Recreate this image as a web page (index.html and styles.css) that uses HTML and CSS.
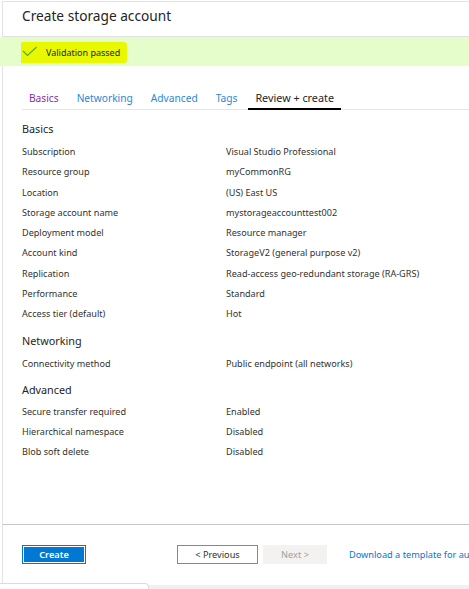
FILE: index.html
```html
<!DOCTYPE html>
<html lang="en">
<head>
    <meta charset="UTF-8">
    <title>Create storage account</title>
    <link rel="stylesheet" href="styles.css">
</head>
<body>
<div class="frame">
    <div class="header">
        <h1>Create storage account</h1>
    </div>
    <div class="banner">
        <span class="mark">
            <svg width="16" height="12" viewBox="0 0 16 12"><path d="M1 5 L5.5 9.5 L14.5 1" fill="none" stroke="#5aa532" stroke-width="1.1"/></svg>
            <span>Validation passed</span>
        </span>
    </div>
    <div class="main">
        <ul class="tabs">
            <li class="visited">Basics</li>
            <li>Networking</li>
            <li>Advanced</li>
            <li>Tags</li>
            <li class="current">Review + create</li>
        </ul>

        <h2>Basics</h2>
        <dl class="rows">
            <dt>Subscription</dt><dd>Visual Studio Professional</dd>
            <dt>Resource group</dt><dd>myCommonRG</dd>
            <dt>Location</dt><dd>(US) East US</dd>
            <dt>Storage account name</dt><dd>mystorageaccounttest002</dd>
            <dt>Deployment model</dt><dd>Resource manager</dd>
            <dt>Account kind</dt><dd>StorageV2 (general purpose v2)</dd>
            <dt>Replication</dt><dd>Read-access geo-redundant storage (RA-GRS)</dd>
            <dt>Performance</dt><dd>Standard</dd>
            <dt>Access tier (default)</dt><dd>Hot</dd>
        </dl>

        <h2>Networking</h2>
        <dl class="rows">
            <dt>Connectivity method</dt><dd>Public endpoint (all networks)</dd>
        </dl>

        <h2 class="tight">Advanced</h2>
        <dl class="rows">
            <dt>Secure transfer required</dt><dd>Enabled</dd>
            <dt>Hierarchical namespace</dt><dd>Disabled</dd>
            <dt>Blob soft delete</dt><dd>Disabled</dd>
        </dl>
    </div>
    <div class="footer">
        <button class="btn primary">Create</button>
        <button class="btn prev">&lt; Previous</button>
        <button class="btn next">Next &gt;</button>
        <a class="link" href="#">Download a template for automation</a>
    </div>
</div>
<div class="dock">
    <div class="dock-tab"></div>
    <div class="dock-rest"></div>
</div>
</body>
</html>
```

FILE: styles.css
```css
* {
    padding: 0;
    margin: 0;
    list-style: none;
    border: 0;
    box-sizing: border-box;
}

html, body {
    width: 469px;
    height: 589px;
    overflow: hidden;
    background: #fff;
}

body {
    font-family: "Noto Sans", "Open Sans", sans-serif;
    color: #323130;
}

.frame {
    margin-left: 2px;
    margin-top: 1px;
    border-left: 1px solid #e3e3e3;
    border-top: 1px solid #e3e3e3;
    height: 582px;
    display: flex;
    flex-direction: column;
}

.header {
    height: 35px;
    border-bottom: 1px solid #e1e1e1;
    padding-left: 19px;
    display: flex;
    align-items: center;
}

.header h1 {
    font-size: 13.7px;
    font-weight: normal;
    color: #252423;
    margin-top: -8px;
}

.banner {
    height: 29px;
    margin-left: -3px;
    background: #e5fdcb;
    display: flex;
    align-items: center;
    padding-left: 21px;
}

.mark {
    display: flex;
    align-items: center;
    gap: 8px;
    height: 21px;
    padding: 0 7px 0 1px;
    background: #e8f800;
    border-radius: 2px 4px 3px 1px;
    font-size: 9px;
    color: #252423;
    margin-top: 2px;
}

.mark svg {
    margin-top: -2px;
}

.main {
    flex: 1;
    padding-left: 19px;
}

.tabs {
    display: flex;
    margin-top: 21px;
    border-bottom: 1px solid #e6e6e6;
    height: 23px;
    padding-left: 7px;
    font-size: 10.2px;
}

.tabs li {
    color: #2a88d8;
    margin-right: 18px;
    line-height: 22px;
}

.tabs li.visited {
    color: #8a2ea8;
}

.tabs li.current {
    color: #252423;
    padding: 0 7px;
    margin-left: -7px;
    border-bottom: 2px solid #000;
    height: 23px;
    font-size: 10.8px;
}

.main h2 {
    font-size: 10.8px;
    font-weight: normal;
    line-height: 22px;
    margin: 6px 0 2px;
    color: #252423;
}

.tabs + h2 {
    margin-top: 8px;
}

.main h2.tight {
    margin: 4px 0 1px;
}

.rows {
    display: grid;
    grid-template-columns: 204px 1fr;
    font-size: 9.1px;
    line-height: 20.25px;
}

.rows dd {
    white-space: nowrap;
}

.footer {
    height: 59px;
    border-top: 1px solid #c6c6c6;
    display: flex;
    align-items: flex-start;
    padding: 20px 0 0 19px;
    white-space: nowrap;
}

.btn {
    flex-shrink: 0;
    height: 19px;
    font-family: inherit;
    font-size: 9.2px;
    background: #fff;
}

.btn.primary {
    width: 64px;
    background: #0078d4;
    color: #fff;
    font-weight: 600;
    border: 1px solid #0078d4;
    box-shadow: inset 0 0 0 1px #fff;
}

.btn.prev {
    width: 81px;
    margin-left: 91px;
    border: 1px solid #8a8886;
    color: #323130;
}

.btn.next {
    width: 64px;
    margin-left: 5px;
    background: #f3f2f1;
    color: #a19f9d;
}

.link {
    flex-shrink: 0;
    margin-left: 22px;
    font-size: 9.2px;
    line-height: 19px;
    color: #0078d4;
    text-decoration: none;
}

.dock {
    display: flex;
    height: 6px;
}

.dock-tab {
    width: 149px;
    background: #fff;
    border-top: 1px solid #dcdcdc;
    border-right: 1px solid #dcdcdc;
    border-top-right-radius: 4px;
}

.dock-rest {
    flex: 1;
    margin-top: 2px;
    background: #f0f0f0;
}
```
